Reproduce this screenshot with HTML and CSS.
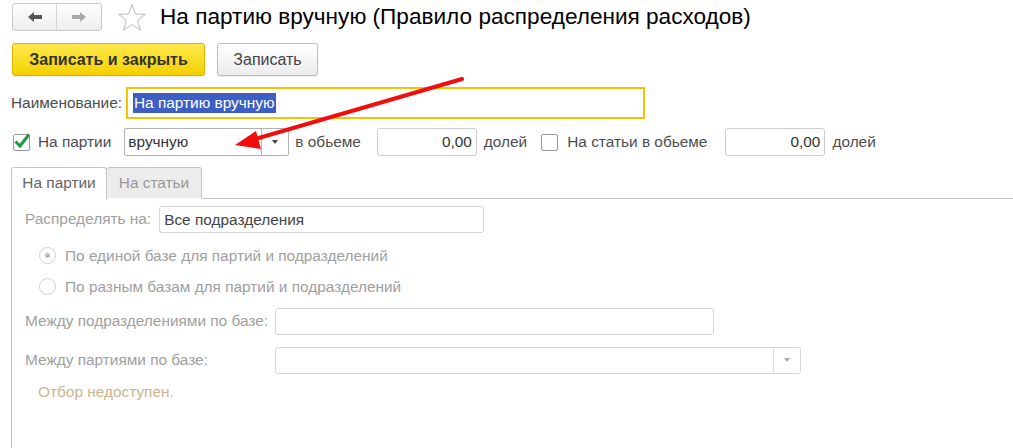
FILE: index.html
```html
<!DOCTYPE html>
<html lang="ru">
<head>
  <meta charset="UTF-8">
  <title>На партию вручную (Правило распределения расходов)</title>
  <link rel="stylesheet" href="styles.css">
</head>
<body>
  <div class="title-bar">
    <div class="nav-group">
      <button class="nav-btn back">
        <svg width="16" height="12" viewBox="0 0 16 12"><path d="M1 6 L7 1 L7 4 L15 4 L15 8 L7 8 L7 11 Z" fill="#555"/></svg>
      </button>
      <button class="nav-btn fwd">
        <svg width="16" height="12" viewBox="0 0 16 12"><path d="M15 6 L9 1 L9 4 L1 4 L1 8 L9 8 L9 11 Z" fill="#aaa"/></svg>
      </button>
    </div>
    <svg class="star" width="30" height="29" viewBox="0 0 30 29"><path d="M15 1.5 L18.4 11 L28.5 11.2 L20.5 17.4 L23.4 27.3 L15 21.5 L6.6 27.3 L9.5 17.4 L1.5 11.2 L11.6 11 Z" fill="none" stroke="#bbb" stroke-width="1"/></svg>
    <h1>На партию вручную (Правило распределения расходов)</h1>
  </div>

  <div class="toolbar">
    <button class="btn btn-primary">Записать и закрыть</button>
    <button class="btn btn-save">Записать</button>
  </div>

  <div class="row name-row">
    <label class="label">Наименование:</label>
    <div class="name-input"><span class="selected">На партию вручную</span></div>
  </div>

  <div class="row opts-row">
    <span class="check checked">
      <svg width="18" height="16" viewBox="0 0 18 16"><path d="M2.5 8.5 L7 13 L16 1.5" fill="none" stroke="#1c9a3c" stroke-width="3"/></svg>
    </span>
    <span class="label">На партии</span>
    <div class="combo">
      <span class="combo-text">вручную</span>
      <span class="combo-btn"><i class="caret"></i></span>
    </div>
    <span class="label">в обьеме</span>
    <div class="num-input">0,00</div>
    <span class="label">долей</span>
    <span class="check second"></span>
    <span class="label">На статьи в обьеме</span>
    <div class="num-input second">0,00</div>
    <span class="label">долей</span>
  </div>

  <div class="tabs">
    <div class="tab active">На партии</div>
    <div class="tab">На статьи</div>
    <div class="tab-fill"></div>
  </div>

  <div class="panel">
    <div class="prow">
      <span class="dlabel">Распределять на:</span>
      <div class="field w-dept">Все подразделения</div>
    </div>
    <div class="radio-row">
      <span class="radio on"></span>
      <span class="dlabel">По единой базе для партий и подразделений</span>
    </div>
    <div class="radio-row">
      <span class="radio"></span>
      <span class="dlabel">По разным базам для партий и подразделений</span>
    </div>
    <div class="prow base-row">
      <span class="dlabel lw">Между подразделениями по базе:</span>
      <div class="field w-base"></div>
    </div>
    <div class="prow">
      <span class="dlabel lw">Между партиями по базе:</span>
      <div class="field combo-d w-part"><span class="combo-btn d"><i class="caret light"></i></span></div>
    </div>
    <div class="note">Отбор недоступен.</div>
  </div>

  <svg class="arrow" width="1013" height="448" viewBox="0 0 1013 448">
    <line x1="462" y1="79" x2="252" y2="140" stroke="#f20d0d" stroke-width="4" stroke-linecap="round"/>
    <path d="M235 145 L256 131 L261 149 Z" fill="#f20d0d"/>
  </svg>
</body>
</html>
```

FILE: styles.css
```css
body {
  margin: 0;
  background: #fff;
  font-family: Arial, "Liberation Sans", sans-serif;
  font-size: 15.4px;
  color: #4d4d4d;
  width: 1013px;
  height: 448px;
  overflow: hidden;
  position: relative;
}
.title-bar {
  display: flex;
  align-items: center;
  height: 28px;
  padding: 3px 0 0 12px;
}
.nav-group {
  display: flex;
  border: 1px solid #c9c9c9;
  border-radius: 3px;
  background: linear-gradient(#fff, #eee);
  height: 26px;
}
.nav-btn {
  width: 44px;
  height: 26px;
  border: none;
  background: none;
  padding: 0;
  display: flex;
  align-items: center;
  justify-content: center;
}
.nav-btn.back {
  border-right: 1px solid #d4d4d4;
}
.star {
  margin-left: 15px;
}
h1 {
  margin: 0 0 0 13px;
  font-size: 22.6px;
  font-weight: normal;
  color: #000;
}
.toolbar {
  display: flex;
  gap: 12px;
  padding: 12px 0 0 12px;
}
.btn {
  height: 33px;
  padding: 0;
  border: 1px solid #bdbdbd;
  border-radius: 3px;
  background: linear-gradient(#fff, #ececec);
  font-family: inherit;
  font-size: 16px;
  color: #444;
  box-shadow: 0 1px 1px rgba(0,0,0,0.08);
}
.btn-primary {
  width: 193px;
  background: linear-gradient(#ffe94d, #f4d000);
  border-color: #d6b400;
  font-weight: bold;
  color: #333;
}
.btn-save {
  width: 101px;
}
.row {
  display: flex;
  align-items: center;
}
.name-row {
  padding: 11px 0 0 11px;
}
.name-input {
  margin-left: 4px;
  width: 510px;
  height: 28px;
  border: 2px solid #f5c400;
  display: flex;
  align-items: center;
  padding-left: 5px;
  box-sizing: content-box;
}
.selected {
  background: #3d5fc4;
  color: #fff;
  padding: 1px 1px;
}
.opts-row {
  padding: 9px 0 0 13px;
  height: 28px;
}
.check {
  width: 15px;
  height: 15px;
  border: 1px solid #999;
  border-radius: 2px;
  background: #fff;
  position: relative;
  margin-right: 8px;
}
.check svg {
  position: absolute;
  left: -1px;
  top: -2px;
}
.check.second {
  margin-left: 14px;
  margin-right: 9px;
}
.combo {
  display: flex;
  width: 163px;
  height: 26px;
  border: 1px solid #b3b3b3;
  border-radius: 2px;
  background: #fff;
  margin: 0 6px 0 13px;
}
.combo-text {
  flex: 1;
  padding-left: 3px;
  line-height: 26px;
  color: #333;
}
.combo-btn {
  width: 26px;
  border-left: 1px solid #b3b3b3;
  display: flex;
  align-items: center;
  justify-content: center;
}
.caret {
  width: 0;
  height: 0;
  border-left: 3px solid transparent;
  border-right: 3px solid transparent;
  border-top: 4px solid #444;
}
.caret.light {
  border-top-color: #aaa;
}
.num-input {
  width: 94px;
  height: 26px;
  line-height: 26px;
  border: 1px solid #ccc;
  border-radius: 3px;
  text-align: right;
  padding-right: 4px;
  margin: 0 7px 0 16px;
  color: #333;
}
.num-input.second {
  margin-left: 18px;
}
.tabs {
  display: flex;
  margin-top: 11px;
  padding-left: 11px;
  height: 32px;
}
.tab {
  width: 94px;
  height: 30px;
  line-height: 30px;
  text-align: center;
  border: 1px solid #c6c6c6;
  border-bottom: none;
  border-radius: 3px 3px 0 0;
  background: #ececec;
  color: #999;
}
.tab.active {
  background: #fff;
  color: #666;
  height: 32px;
}
.tab + .tab {
  border-left: none;
}
.tab-fill {
  flex: 1;
  border-bottom: 1px solid #c0c0c0;
}
.panel {
  margin-left: 11px;
  border-left: 1px solid #c0c0c0;
  height: 260px;
  padding: 6px 0 0 13px;
  color: #a0a0a0;
}
.prow {
  display: flex;
  align-items: center;
  height: 28px;
  margin-bottom: 11px;
}
.dlabel {
  color: #a0a0a0;
}
.lw {
  width: 250px;
}
.field {
  height: 27px;
  border: 1px solid #d6d6d6;
  border-radius: 3px;
  background: #fff;
  line-height: 25px;
  padding-left: 4px;
  box-sizing: border-box;
}
.w-dept {
  margin-left: 8px;
  width: 325px;
  color: #444;
}
.w-base {
  width: 439px;
}
.w-part {
  width: 526px;
  display: flex;
  justify-content: flex-end;
  padding-left: 0;
}
.combo-btn.d {
  border-left-color: #dedede;
}
.radio-row {
  display: flex;
  align-items: center;
  height: 31px;
  padding-left: 14px;
  margin-top: -4px;
}
.radio-row + .radio-row {
  margin-top: 0;
}
.radio {
  width: 17px;
  height: 17px;
  border: 1px solid #cfcfcf;
  border-radius: 50%;
  margin-right: 9px;
  position: relative;
  box-sizing: border-box;
}
.radio.on::after {
  content: "";
  position: absolute;
  left: 5px;
  top: 5px;
  width: 5px;
  height: 5px;
  border-radius: 50%;
  background: #bbb;
}
.base-row {
  margin-top: 5px;
}
.note {
  padding-left: 13px;
  color: #c8b48f;
  margin-top: -2px;
}
.arrow {
  position: absolute;
  left: 0;
  top: 0;
  pointer-events: none;
}
```
